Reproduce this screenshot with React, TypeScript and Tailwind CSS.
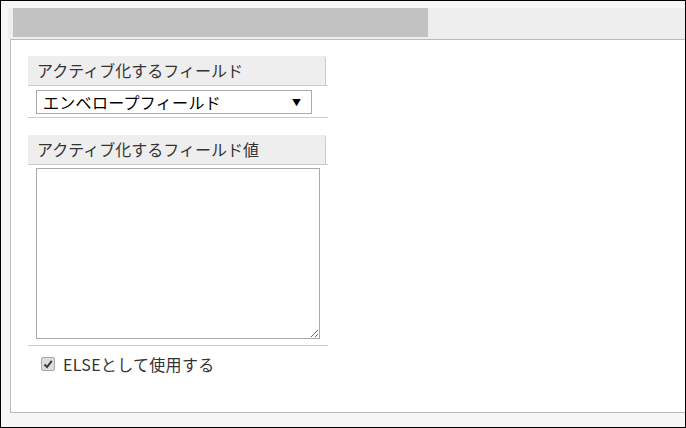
import React from 'react'

const font = { fontFamily: '"Noto Sans CJK JP", "Noto Sans", sans-serif' }

const SectionHeader: React.FC<{ label: string }> = ({ label }) => (
  <div className="w-full border-b border-[#cccccc]">
    <div className="h-[29px] w-[298px] rounded-tr-[3px] border-r border-[#cccccc] bg-[#eeeeee] pl-[9px] text-[16px] leading-[28px] text-[#333333]">
      {label}
    </div>
  </div>
)

const CheckMark = () => (
  <span className="flex h-[14px] w-[14px] items-center justify-center rounded-[2px] border border-[#a9a9a9] bg-[#dcdcdc]">
    <svg width="10" height="10" viewBox="0 0 10 10">
      <path d="M1.5 5.5 L4 8 L8.8 1.8" fill="none" stroke="#3a3a3a" strokeWidth="2" />
    </svg>
  </span>
)

export default function App() {
  return (
    <div
      className="box-border flex h-[428px] w-[686px] flex-col border border-black bg-[#f7f7f7]"
      style={font}
    >
      {/* tab strip */}
      <div className="ml-[7px] mt-[7px] flex h-[31px] rounded-tl-[3px] bg-[#eeeeee]">
        <div className="ml-[5px] h-[29px] w-[415px] bg-[#c2c2c2]" />
      </div>

      {/* settings panel */}
      <div className="ml-[9px] h-[374px] border-b border-l border-t border-[#bbbbbb] bg-white pl-[17px] pt-[16px]">
        <div className="w-[300px] border-b border-[#cccccc] pb-[3px]">
          <SectionHeader label="アクティブ化するフィールド" />
          <div className="ml-[8px] mt-[4px] flex h-[24px] w-[276px] items-center justify-between border border-[#aaaaaa] pl-[6px] pr-[10px] text-[16px] text-black">
            <span className="leading-[22px] tracking-[0.3px]">エンベロープフィールド</span>
            <span className="text-[9px] leading-none">▼</span>
          </div>
        </div>

        <div className="mt-[17px] w-[300px] border-b border-[#cccccc] pb-[6px]">
          <SectionHeader label="アクティブ化するフィールド値" />
          <textarea className="ml-[8px] mt-[3px] block h-[171px] w-[284px] resize border border-[#aaaaaa] outline-none" />
        </div>

        <label className="ml-[13px] mt-[8px] flex items-center gap-[8px] text-[16px] text-[#333333]">
          <CheckMark />
          <span className="leading-[20px] tracking-[0.3px]">ELSEとして使用する</span>
        </label>
      </div>
    </div>
  )
}
